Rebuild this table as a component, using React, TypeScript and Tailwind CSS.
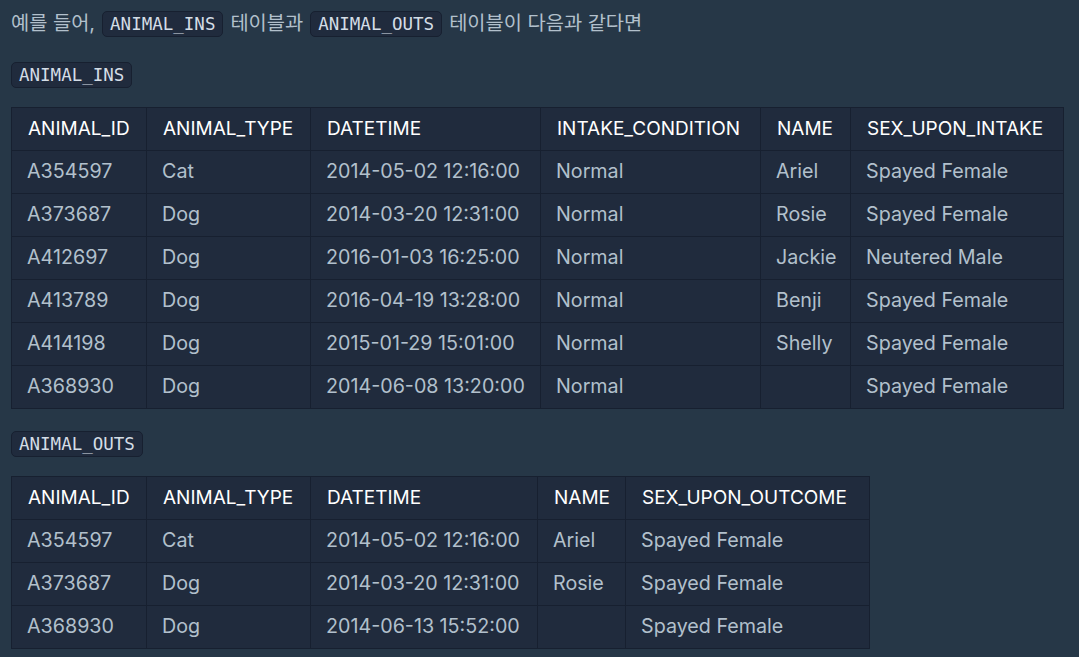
import React from 'react';

const ins = [
  ['A354597', 'Cat', '2014-05-02 12:16:00', 'Normal', 'Ariel', 'Spayed Female'],
  ['A373687', 'Dog', '2014-03-20 12:31:00', 'Normal', 'Rosie', 'Spayed Female'],
  ['A412697', 'Dog', '2016-01-03 16:25:00', 'Normal', 'Jackie', 'Neutered Male'],
  ['A413789', 'Dog', '2016-04-19 13:28:00', 'Normal', 'Benji', 'Spayed Female'],
  ['A414198', 'Dog', '2015-01-29 15:01:00', 'Normal', 'Shelly', 'Spayed Female'],
  ['A368930', 'Dog', '2014-06-08 13:20:00', 'Normal', '', 'Spayed Female'],
];

const outs = [
  ['A354597', 'Cat', '2014-05-02 12:16:00', 'Ariel', 'Spayed Female'],
  ['A373687', 'Dog', '2014-03-20 12:31:00', 'Rosie', 'Spayed Female'],
  ['A368930', 'Dog', '2014-06-13 15:52:00', '', 'Spayed Female'],
];

function Code({ children }: { children: React.ReactNode }) {
  return (
    <code className="inline-block rounded-[5px] border border-[#172030] bg-[#202b3d] px-[7px] h-[26px] leading-[24px] text-[17.5px] text-[#d4dde6] font-['DejaVu_Sans_Mono',monospace]">
      {children}
    </code>
  );
}

function Table({ head, rows, widths, width }: { head: string[]; rows: string[][]; widths: string[]; width: string }) {
  return (
    <table className={`table-fixed border-collapse border border-[#172030] bg-[#202b3d] ${width}`}>
      <colgroup>
        {widths.map((w, i) => (
          <col key={i} className={w} />
        ))}
      </colgroup>
      <thead>
        <tr>
          {head.map((h) => (
            <th key={h} className="h-[43px] border border-[#172030] pl-[16px] pr-0 text-left text-[19px] font-normal text-white whitespace-nowrap">
              {h}
            </th>
          ))}
        </tr>
      </thead>
      <tbody>
        {rows.map((r, i) => (
          <tr key={i}>
            {r.map((c, j) => (
              <td key={j} className="h-[43px] border border-[#172030] pl-[15px] pr-0 text-[19.7px] text-[#b2c0cc] whitespace-nowrap">
                {c}
              </td>
            ))}
          </tr>
        ))}
      </tbody>
    </table>
  );
}

export default function App() {
  return (
    <main className="min-h-screen bg-[#263747] px-[11px] pt-[11px] font-['Inter','Noto_Sans_CJK_KR',sans-serif]">
      <p className="flex items-center gap-[7px] text-[19.8px] text-[#b2c0cc] h-[26px]">
        <span>예를 들어,</span>
        <Code>ANIMAL_INS</Code>
        <span>테이블과</span>
        <Code>ANIMAL_OUTS</Code>
        <span>테이블이 다음과 같다면</span>
      </p>

      <div className="mt-[25px] mb-[19px] h-[26px]">
        <Code>ANIMAL_INS</Code>
      </div>
      <Table
        width="w-[1052px]"
        head={['ANIMAL_ID', 'ANIMAL_TYPE', 'DATETIME', 'INTAKE_CONDITION', 'NAME', 'SEX_UPON_INTAKE']}
        rows={ins}
        widths={['w-[135px]', 'w-[164px]', 'w-[230px]', 'w-[220px]', 'w-[90px]', 'w-[213px]']}
      />

      <div className="mt-[22px] mb-[19px] h-[26px]">
        <Code>ANIMAL_OUTS</Code>
      </div>
      <Table
        width="w-[858px]"
        head={['ANIMAL_ID', 'ANIMAL_TYPE', 'DATETIME', 'NAME', 'SEX_UPON_OUTCOME']}
        rows={outs}
        widths={['w-[135px]', 'w-[164px]', 'w-[227px]', 'w-[88px]', 'w-[244px]']}
      />
    </main>
  );
}
